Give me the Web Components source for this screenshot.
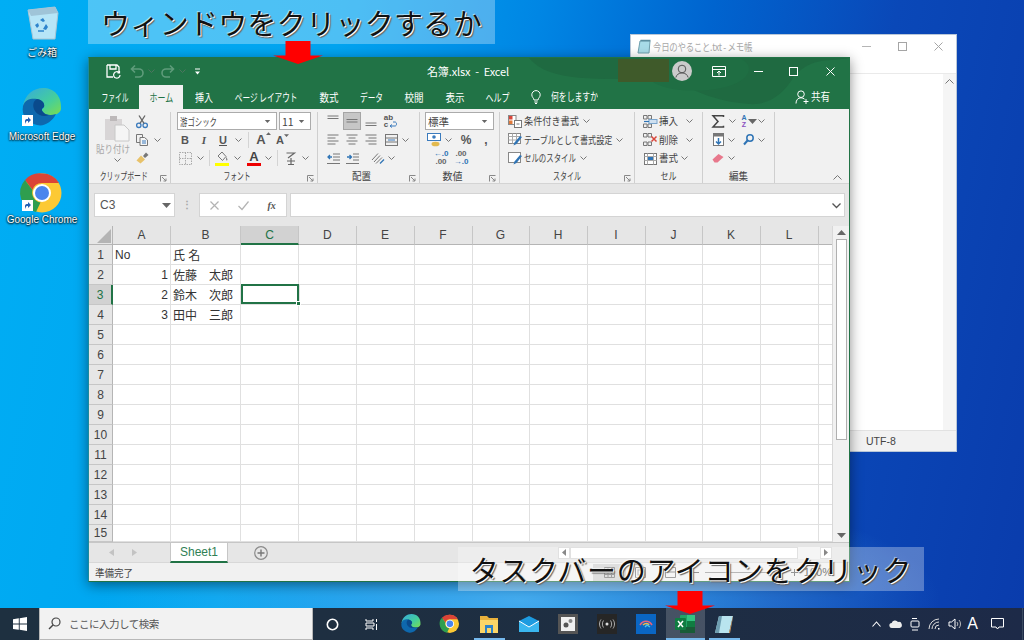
<!DOCTYPE html>
<html lang="ja"><head><meta charset="utf-8"><title>Excel</title>
<style>
html,body{margin:0;padding:0;width:1024px;height:640px;overflow:hidden;font-family:"Noto Sans CJK JP","Liberation Sans",sans-serif}
</style></head><body>
<desk-top></desk-top>
<script>
const JP='"Noto Sans CJK JP","Noto Sans",sans-serif';
const S=(c,w=1)=>`fill="none" stroke="${c}" stroke-width="${w}"`;
const ICONS={
 chev:[7,4,`<path d="M.5.5 3.5 3.5 6.5.5" ${S('#777')}/>`],
 save:[16,16,`<path d="M2 2h10l2 2v5M2 2v12h6M5 2v4h6V2" ${S('#fff',1.3)}/><path d="M15 12a3.2 3.2 0 1 1-1-2.4M14.500 8v2h-2" ${S('#fff',1.2)}/>`],
 undo:[16,16,`<path d="M3 6h7a4 4 0 0 1 0 8H6M6 2.500 2.500 6 6 9.500" ${S('#5f9c7b',1.6)}/>`],
 redo:[16,16,`<path d="M13 6H6a4 4 0 0 0 0 8h4M10 2.500 13.500 6 10 9.500" ${S('#5f9c7b',1.6)}/>`],
 qat:[7,7,`<path d="M1 1h5" ${S('#fff')}/><path d="M1 3.500h5L3.500 6.500z" fill="#fff"/>`],
 rbn:[14,11,`<path d="M.5.5h13v10H.5zM.5 3.500h13" ${S('#fff')}/><path d="M7 9.500V5M5 7l2-2 2 2" ${S('#fff')}/>`],
 min:[11,11,`<path d="M2 5.500h9" ${S('#fff')}/>`],
 max:[9,9,`<rect x=".5" y=".5" width="8" height="8" ${S('#fff')}/>`],
 close:[9,9,`<path d="M.5.5l8 8M8.500.5l-8 8" ${S('#fff')}/>`],
 nmin:[9,9,`<path d="M0 4.500h9" ${S('#b5b5b5')}/>`],
 nmax:[9,9,`<rect x=".5" y=".5" width="8" height="8" ${S('#a5a5a5')}/>`],
 nclose:[9,9,`<path d="M.5.5l8 8M8.500.5l-8 8" ${S('#a5a5a5')}/>`],
 avatar:[20,20,`<circle cx="10" cy="10" r="10" fill="#cbcbcb"/><circle cx="10" cy="8" r="3.800" ${S('#555')}/><path d="M3.800 16.500a6.500 6.500 0 0 1 12.400 0" ${S('#555')}/>`],
 bulb:[10,14,`<path d="M3 10C2.800 8 .8 7.200.8 4.800a4.200 4.200 0 0 1 8.400 0C9.200 7.200 7.200 8 7 10zM3.300 12h3.400M4 13.500h2" ${S('#fff')}/>`],
 share:[14,14,`<circle cx="6" cy="4.200" r="3.300" ${S('#fff')}/><path d="M1 13.500c0-3.500 2-5.700 5-5.700 1.500 0 2.500.5 3.500 1.300M11 9v5M8.500 11.500h5" ${S('#fff')}/>`],
 paste:[26,27,`<rect x="1" y="4" width="17" height="21" fill="#d8d5d6"/><rect x="6" y="1" width="7" height="5" fill="#bdb9ba"/><path d="M11 10h9l5 5v11H11z" fill="#f5f5f5" stroke="#c8c8c8"/>`],
 cut:[12,13,`<circle cx="2.800" cy="10.300" r="2.200" ${S('#3b7bbd',1.3)}/><circle cx="9.200" cy="10.300" r="2.200" ${S('#3b7bbd',1.3)}/><path d="M4 8.300 9 .5M8 8.300 3 .5" ${S('#666',1.300)}/>`],
 copy:[12,12,`<path d="M.5.5h6v8h-6z" ${S('#777')}/><path d="M4 3.500h4.500l3 2.500v5.500H4z" fill="#f5f5f5" stroke="#777"/><path d="M6 7h4M6 9h4" ${S('#3b7bbd')}/>`],
 painter:[13,12,`<path d="M.5 8.500l4.500-5 4 4-4.500 4z" fill="#e8c26a"/><path d="M7 4l3-3.500 2.500 2.500L9 6z" fill="#777"/>`],
 borders:[13,13,`<path d="M.5.5h12v12H.5zM6.500.5v12M.5 6.500h12" fill="none" stroke="#aaa" stroke-dasharray="1.500 1"/>`],
 fill:[14,16,`<path d="M3 6l4-4 4 4.500-3.500 4z" fill="#f3f3f3" stroke="#777"/><path d="M11 7c1 1.300 1.500 2 1.500 2.800s-1.500 1-1.500 0z" fill="#888"/><rect x="0" y="13" width="14" height="3" fill="#ffff00"/>`],
 phon:[11,15,`<path d="M1.500 2h8L3 7M2 10h8M6 7v7M3 13.500h6" ${S('#666',1.200)}/>`],
 atop:[12,12,`<path d="M.5 1h11M.5 3.500h11" ${S('#777')}/>`],
 amid:[12,12,`<path d="M.5 4.500h11M.5 7h11" ${S('#777')}/>`],
 abot:[12,12,`<path d="M.5 8h11M.5 10.500h11" ${S('#777')}/>`],
 wrap:[9,7,`<path d="M3 6.500 1 5l2-1.500M1 5h5c2 0 2-4 0-4H4" ${S('#3b7bbd')}/>`],
 al:[12,11,`<path d="M.5 1h11M.5 4h8M.5 7h11M.5 10h8" ${S('#777')}/>`],
 ac:[12,11,`<path d="M.5 1h11M2.500 4h7M.5 7h11M2.500 10h7" ${S('#777')}/>`],
 ar:[12,11,`<path d="M.5 1h11M3.500 4h8M.5 7h11M3.500 10h8" ${S('#777')}/>`],
 merge:[13,12,`<rect x=".5" y=".5" width="12" height="11" ${S('#777')}/><path d="M.5 4h12M.5 8h12" ${S('#777')}/><path d="M3 6h7" ${S('#3b7bbd')}/>`],
 indl:[13,11,`<path d="M6 1h7M6 4h7M6 7h7M0 10.500h13" ${S('#777')}/><path d="M5 4H1M3 2 1 4l2 2" ${S('#2f74b5',1.300)}/>`],
 indr:[13,11,`<path d="M7 1h6M7 4h6M7 7h6M0 10.500h13" ${S('#777')}/><path d="M1 4h4M3.500 2l2 2-2 2" ${S('#2f74b5',1.300)}/>`],
 orient:[14,12,`<path d="M1 8 7 1.500M3 10l6-6.500M5 11.500l6-6" ${S('#777')}/><path d="M9 11.500l4-4" ${S('#2f74b5',1.300)}/>`],
 acct:[14,14,`<rect x=".5" y=".5" width="13" height="7" fill="#fff" stroke="#3b7bbd"/><circle cx="7" cy="4" r="1.800" fill="#3b7bbd"/><ellipse cx="8.500" cy="11" rx="4" ry="2.300" fill="#e2b94e"/>`],
 cf:[14,13,`<rect x=".5" y=".5" width="7.500" height="9" fill="#fff" stroke="#888"/><rect x="1" y="1" width="3.500" height="3.500" fill="#d9473b"/><rect x="1" y="5.500" width="3.500" height="3.500" fill="#e0793a"/><rect x="6.500" y="5.500" width="7" height="7" fill="#fff" stroke="#777"/><path d="M8.500 9h3" ${S('#777')}/>`],
 tf:[14,13,`<rect x=".5" y=".5" width="12" height="10" fill="#fff" stroke="#888"/><path d="M.5 3.500h12M.5 7h12M4.500.5v10M8.500.5v10" ${S('#aaa')}/><path d="M14 4 8.500 11l-3 1.500 1-3L12 3z" fill="#2f74b5"/>`],
 cs:[14,13,`<rect x=".5" y=".5" width="12" height="10" fill="#fff" stroke="#888"/><path d="M14 4 8.500 11l-3 1.500 1-3L12 3z" fill="#2f74b5"/>`],
 ins:[14,13,`<path d="M.5.5h3.500v3.500H.5zM5 .5h3.500v3.500H5zM.5 9h3.500v3.500H.5zM5 9h3.500v3.500H5z" ${S('#777')}/><rect x="6" y="4.500" width="8" height="4" fill="#cfe0f0" stroke="#7aa5cc"/><path d="M1 6.500h5" ${S('#2f74b5',1.200)}/>`],
 del:[14,13,`<path d="M.5.5h3.500v3.500H.5zM5 .5h3.500v3.500H5zM.5 9h3.500v3.500H.5zM5 9h3.500v3.500H5z" ${S('#777')}/><path d="M8.500 3.500l5 5M13.500 3.500l-5 5" ${S('#d9473b',1.500)}/>`],
 fmt:[13,13,`<rect x=".5" y="1.500" width="12" height="11" fill="#fff" stroke="#777"/><rect x="3.500" y="4.500" width="6" height="4" fill="#2f74b5"/><path d="M.5 4.500h12M.5 8.500h12M3.500 1.500v11M9.500 1.500v11" ${S('#aaa')}/>`],
 sigma:[12,13,`<path d="M11.500 2V.8H1L6 6.500 1 12h10.500v-1.200" ${S('#444',1.500)}/>`],
 filld:[11,13,`<rect x=".5" y=".5" width="10" height="12" fill="#fff" stroke="#777"/><rect x="1" y="1" width="9" height="2.500" fill="#777"/><path d="M5.500 5v6M3 8.500l2.500 2.500L8 8.500" ${S('#2f74b5',1.500)}/>`],
 find:[11,11,`<circle cx="7" cy="4" r="3.200" ${S('#2f74b5',1.500)}/><path d="M4.500 6.500 1 10.500" ${S('#2f74b5',2)}/>`],
 eraser:[12,10,`<path d="M.5 6.500 6.500 1l5 3-6 5.500h-3z" fill="#e8788c"/>`],
 launch:[7,7,`<path d="M.5 6.500v-6h6" ${S('#888')}/><path d="M2 2l4 4M6 3.500V6H3.500" ${S('#888')}/>`],
 up:[9,5,`<path d="M.5 4.500 4.500.5l4 4" ${S('#777')}/>`],
 xb:[9,9,`<path d="M.5.5l8 8M8.500.5l-8 8" ${S('#b3b3b3',1.200)}/>`],
 ck:[11,9,`<path d="M.5 5 4 8.500 10.500.5" ${S('#b3b3b3',1.200)}/>`],
 fbchev:[9,5,`<path d="M.5.5l4 4 4-4" ${S('#555',1.300)}/>`],
 corner:[14,14,`<path d="M14 0v14H0z" fill="#b4b4b4"/>`],
 tl:[5,7,`<path d="M5 0v7L0 3.500z" fill="#c3c3c3"/>`],
 tr:[5,7,`<path d="M0 0v7l5-3.500z" fill="#c3c3c3"/>`],
 plus:[14,14,`<circle cx="7" cy="7" r="6.300" ${S('#8a8a8a',1.200)}/><path d="M3.500 7h7M7 3.500v7" ${S('#777',1.400)}/>`],
 sup:[9,5,`<path d="M0 5 4.500 0 9 5z" fill="#666"/>`],
 sdn:[9,5,`<path d="M0 0 4.500 5 9 0z" fill="#666"/>`],
 sl:[4,7,`<path d="M4 0v7L0 3.500z" fill="#555"/>`],
 sr:[4,7,`<path d="M0 0v7l4-3.500z" fill="#555"/>`],
 vgrid:[11,11,`<path d="M.5.5h10v10H.5zM.5 4h10M.5 7.500h10M4 .5v10M7.500 .5v10" ${S('#777')}/>`],
 vpage:[11,11,`<path d="M.5.5h10v10H.5z" ${S('#777')}/><rect x="3" y="3" width="5" height="5" ${S('#999')}/>`],
 vbrk:[11,11,`<path d="M.5.5h10v10H.5zM.5 5h10" ${S('#777')}/>`],
 zm:[7,7,`<path d="M0 3.500h7" ${S('#666')}/>`],
 zp:[7,7,`<path d="M0 3.500h7M3.500 0v7" ${S('#666')}/>`],
 notepad:[15,15,`<path d="M3 2h10l-1 12H1z" fill="#a8dbe8" stroke="#6f9fae"/><path d="M3.500 1.500h10" ${S('#5d8fa0',1.500)}/>`],
 bin:[34,36,`<path d="M3 6 30 3l3 6-3 26H8z" fill="#dff1f8" fill-opacity=".82" stroke="#a9c6d4"/><path d="M3 6 30 3l3 6-27 3z" fill="#9fc4d8"/><path d="M15 16l3-2 2 3-2 1zM12 24l-2-3 3-2 1 3zM21 20l2 3-2 3-3-1z" fill="#2d83cc"/><path d="M13 27h6" ${S('#2d83cc',1.500)}/>`],
 edge:[40,40,`<defs><linearGradient id="eg" x1="0" y1="0" x2="1" y2="1"><stop offset="0" stop-color="#36a9df"/><stop offset=".6" stop-color="#45cf9a"/><stop offset="1" stop-color="#7ddc4e"/></linearGradient></defs><path d="M1 18C3 6 12 0 21 0c11 0 19 8 18 21-1 5-6 6-11 6-5 0-8-2-8-5 0-1 1-2 2-3-2-4-7-7-12-5-5 1-8 4-9 4z" fill="url(#eg)"/><path d="M1 18C3 11 10 10 15 11c6 1 8 5 7 8-2 1-3 3-1 5 2 3 8 4 13 2-4 8-12 13-19 11C6 35-1 28 1 18z" fill="#0e68ad"/><path d="M15 11c6 1 8 5 7 8-2 1-3 3-1 5 1 2 4 3 6 3-4 2-11 1-14-4-3-5-2-10 2-12z" fill="#0a4a8c"/>`],
 chrome:[40,40,`<circle cx="20" cy="20" r="19.500" fill="#fcc934"/><path d="M20 .5A19.500 19.500 0 0 1 37 10H20a10 10 0 0 0-9.500 7L3 7A19.500 19.500 0 0 1 20 .5z" fill="#db4437"/><path d="M3 7l7.500 10a10 10 0 0 0 8 12.500L14 39A19.500 19.500 0 0 1 3 7z" fill="#2f9e4f"/><circle cx="20" cy="20" r="9" fill="#fff"/><circle cx="20" cy="20" r="7" fill="#4a85ed"/>`],
 shortcut:[11,11,`<rect width="11" height="11" fill="#fff"/><path d="M3 9V6c0-1.500 1-2 2.500-2H6V2l3 3-3 3V6h-.5C4.500 6 4 6.500 3 9z" fill="#2461b5"/>`],
 win:[14,14,`<path d="M0 2.200 5.800 1.300v5.300H0zM6.700 1.200 14 0v6.600H6.700zM0 7.500h5.800v5.300L0 12zM6.700 7.500H14V14l-7.300-1.200z" fill="#fff"/>`],
 search:[13,13,`<circle cx="8" cy="5" r="4" ${S('#444',1.200)}/><path d="M5 8 1 12" ${S('#444',1.400)}/>`],
 cortana:[13,13,`<circle cx="6.500" cy="6.500" r="5.200" ${S('#fff',1.600)}/>`],
 tview:[13,13,`<path d="M1 1v2h7V1M1 12v-2h7v2M1 5h8v3H1zM11.500 1v3M11.500 6v6" ${S('#fff')}/>`],
 folder:[18,18,`<path d="M0 1h7l2 2h9v15H0z" fill="#e8b13c"/><rect y="5" width="18" height="13" fill="#fbd667"/><rect x="5" y="10" width="8" height="8" fill="#2c83c9"/><rect x="7" y="13" width="4" height="5" fill="#fbd667"/>`],
 mail:[20,16,`<path d="M0 5 10 0l10 5v11H0z" fill="#1d9be0"/><path d="M0 5l10 6 10-6v11H0z" fill="#3ab7f0"/><path d="M0 5l10 6 10-6" ${S('#fff',1)}/>`],
 app1:[20,20,`<rect width="20" height="20" fill="#555"/><rect x="3" y="3" width="14" height="14" fill="#f0f0f0"/><circle cx="8" cy="11" r="2.500" fill="#555"/><circle cx="12.500" cy="7" r="2" fill="#888"/>`],
 app2:[20,20,`<rect width="20" height="20" fill="#262626"/><circle cx="10" cy="10" r="1.500" fill="#ddd"/><path d="M6.500 6.500c-1.500 2-1.500 5 0 7M13.500 6.500c1.500 2 1.500 5 0 7M4 5.500c-2 3-2 6 0 9M16 5.500c2 3 2 6 0 9" ${S('#ccc',.8)}/>`],
 app3:[20,20,`<rect width="20" height="20" fill="#0a66c4"/><path d="M4 11c3-5 9-5 12 0" ${S('#e8637a',1.600)}/><path d="M7 11c2-2 5-2 6 0" ${S('#f1b94a',1.600)}/><path d="M9 13l2-2 3 2" ${S('#4ec2e8',1.400)}/>`],
 excel:[20,18,`<rect x="5" y="0" width="15" height="18" rx="1" fill="#21a366"/><rect x="12" y="0" width="8" height="6" fill="#33c481"/><rect x="5" y="12" width="15" height="6" fill="#185c37"/><rect x="12" y="6" width="8" height="6" fill="#107c41"/><rect x="0" y="3" width="11" height="12" rx="1" fill="#107c41"/><path d="M3 6l5 6M8 6l-5 6" ${S('#fff',1.500)}/>`],
 npad:[20,19,`<path d="M5 1h14l-4 17H1z" fill="#b9e4ef"/><path d="M1 18 5 1h3L5 18z" fill="#6d9db0"/><path d="M15 18l4-17v1l-3 16z" fill="#e2a058"/>`],
 tup:[9,6,`<path d="M.5 5.500 4.500 1l4 4.500" ${S('#fff',1.100)}/>`],
 cloud:[13,8,`<path d="M3 8a2.500 2.500 0 0 1-.3-5A3.500 3.500 0 0 1 9 2a3 3 0 0 1 1.500 6z" fill="#ededed"/>`],
 meet:[10,15,`<rect x="1" y="4" width="8" height="6" rx="1" ${S('#fff')}/><path d="M2 1.500h5M2 13h6" ${S('#fff')}/>`],
 wifi:[13,12,`<path d="M1 11a10 10 0 0 1 10-10M4 11a7 7 0 0 1 7-7M7 11a4 4 0 0 1 4-4" ${S('#ddd')}/><path d="M10 10h1.500v1.500H10z" fill="#fff"/>`],
 vol:[13,12,`<path d="M1 4h2.500L7 1v10L3.500 8H1z" ${S('#fff')}/><path d="M9 4a3 3 0 0 1 0 4M11 2a6 6 0 0 1 0 8" ${S('#bbb')}/>`],
 note:[13,12,`<path d="M.5.5h12v8.500H8L6.500 11 5 9H.5z" ${S('#fff')}/>`],
 blob:[760,51,`<path d="M440 0c20 25 70 20 130 22 30 2 40 20 90 24 25 2 40-18 45-28 20-20 35-14 55-18z" fill="#1f6a41"/><path d="M560 0c-15 20 10 36 60 32 40-4 50-24 30-32z" fill="#1f6e43"/>`]
};
ICONS['edge-s']=[20,20,'<g transform="scale(.5)">'+ICONS.edge[2].replace('id="eg"','id="eg2"').replace('url(#eg)','url(#eg2)')+'</g>'];
ICONS['chrome-s']=[20,20,'<g transform="scale(.47) translate(1,1)">'+ICONS.chrome[2]+'</g>'];
class XIcon extends HTMLElement{
 connectedCallback(){
  if(this.shadowRoot)return;
  const d=ICONS[this.getAttribute('n')];
  const r=this.attachShadow({mode:'open'});
  r.innerHTML=`<style>:host{display:inline-flex;flex:none;line-height:0}svg{display:block;overflow:visible}</style><svg xmlns="http://www.w3.org/2000/svg" width="${d[0]}" height="${d[1]}" viewBox="0 0 ${d[0]} ${d[1]}">${d[2]}</svg>`;
 }
}
customElements.define('x-icon',XIcon);
const I=n=>`<x-icon n="${n}"></x-icon>`;
/* narrow UI text: the reference's UI face has much narrower kana than any installed CJK family */
const FT=(t,w,size=10.5,origin='left',n=null)=>{
 const len=n||[...t].reduce((a,c)=>a+(c===' '?.25:1),0);
 return `<span style="display:inline-block;white-space:nowrap;font-size:${size}px;transform:scaleX(${(w/(len*size)).toFixed(3)});transform-origin:${origin} center">${t}</span>`;
};
const FB=(t,w,size=10.5,n=null)=>`<span style="display:block;width:${w}px;white-space:nowrap;line-height:1.3">${FT(t,w,size,'left',n)}</span>`;

class DeskShortcut extends HTMLElement{
 connectedCallback(){
  if(this.shadowRoot)return;
  const sc=this.hasAttribute('link');
  const r=this.attachShadow({mode:'open'});
  r.innerHTML=`<style>:host{display:flex;flex-direction:column;align-items:center;width:84px;height:var(--h,84px);color:#fff;font:10px "Liberation Sans",${JP};text-shadow:0 1px 2px #000,0 0 2px #000}
  .pic{position:relative;display:flex;height:var(--ph,40px);align-items:center}
  .sc{position:absolute;left:0;bottom:2px;line-height:0}
  .t{margin-top:var(--mt,3px);white-space:nowrap}</style>
  <div class="pic"><slot></slot>${sc?`<span class="sc">${I('shortcut')}</span>`:''}</div><div class="t">${this.getAttribute('label')}</div>`;
 }
}
customElements.define('desk-shortcut',DeskShortcut);

class NoteBanner extends HTMLElement{
 constructor(){super();this.attachShadow({mode:'open'}).innerHTML=`<style>:host{display:flex;align-items:center;justify-content:center;background:rgba(255,255,255,.3);height:44px;box-sizing:border-box;color:#111;font:400 29px/44px "Noto Sans CJK JP",sans-serif;white-space:nowrap;text-shadow:1px 1px 0 #fff,-1px -1px 0 rgba(255,255,255,.5),2px 2px 1px #666}</style><slot></slot>`}
}
customElements.define('note-banner',NoteBanner);

class RedArrow extends HTMLElement{
 constructor(){super();this.attachShadow({mode:'open'}).innerHTML=`<style>:host{display:block;width:50px;height:23px;line-height:0}</style><svg xmlns="http://www.w3.org/2000/svg" width="50" height="23" viewBox="0 0 50 23"><path d="M12.500 0h25v14.500H50L25 23 0 14.500h12.500z" fill="#ff0000"/></svg>`}
}
customElements.define('red-arrow',RedArrow);

class NotepadWindow extends HTMLElement{
 constructor(){super();this.attachShadow({mode:'open'}).innerHTML=`<style>
 :host{display:flex;flex-direction:column;box-sizing:border-box;background:#fff;border:1px solid #b9c7d8;font:11px ${JP};color:#aaa}
 .tb{display:flex;align-items:center;height:23px;padding:0 0 0 6px;flex:none}
 .tt{margin-left:1px;flex:1;font-size:10.500px;color:#a8a8a8;white-space:nowrap;letter-spacing:-.3px}
 .tt span{display:inline-block;transform:scaleX(.8);transform-origin:left center}
 .c{width:36px;display:flex;justify-content:center}
 .menu{height:15px;flex:none;border-bottom:1px solid #eaeaea}
 .body{flex:1;display:flex;justify-content:flex-end}
 .sb{width:13px;background:#f5f5f5;display:flex;justify-content:center;padding-top:5px;box-sizing:border-box}
 .st{height:20px;flex:none;background:#f2f2f2;border-top:1px solid #e2e2e2;color:#444;display:flex;align-items:center;padding-left:235px;font:10.500px "Liberation Sans",sans-serif}
 </style><div class="tb">${I('notepad')}<div class="tt"><span>今日のやること.txt - メモ帳</span></div><span class="c">${I('nmin')}</span><span class="c">${I('nmax')}</span><span class="c">${I('nclose')}</span></div><div class="menu"></div><div class="body"><div class="sb">${I('up')}</div></div><div class="st">UTF-8</div>`}
}
customElements.define('notepad-window',NotepadWindow);

class RbGroup extends HTMLElement{
 constructor(){super();
  this.attachShadow({mode:'open'}).innerHTML=`<style>
  :host{display:flex;flex-direction:column;box-sizing:border-box;width:var(--w);height:71px;border-right:1px solid #cfcfcf;position:relative;flex:none}
  .b{height:56px;flex:none}
  .lb{height:14px;margin-top:1px;display:flex;justify-content:center;align-items:center;font:10.500px/14px ${JP};color:#444;white-space:nowrap;padding-right:var(--lo,0);box-sizing:border-box}
  .l{position:absolute;right:3px;bottom:1px;line-height:0}
  </style><div class="b"><slot></slot></div><div class="lb"></div><span id="ll"></span>`;
 }
 connectedCallback(){
  this.shadowRoot.querySelector('.lb').innerHTML=FT(this.getAttribute('label')||'',+this.getAttribute('lw'),10.5,'center');
  if(this.hasAttribute('launch'))this.shadowRoot.getElementById('ll').innerHTML=`<span class="l">${I('launch')}</span>`;
 }
}
customElements.define('rb-group',RbGroup);

/* a flow row: each item is placed by its centre through margins */
function row(base,items){
 let cur=base,out='';
 for(const [c,cx,w=16] of items){
  const left=cx-w/2,m=left-cur;
  out+=`<span class="it" style="margin-left:${m}px;width:${w}px">${c}</span>`;cur=left+w;
 }
 return `<div class="row">${out}</div>`;
}
const CH=I('chev');
const B=(t,x='')=>`<b style="font:700 11px 'Liberation Sans',sans-serif;color:#555;${x}">${t}</b>`;
const cmb=(t,w)=>`<span class="cmb" style="width:${w}px"><span>${t}</span>${I('sdn')}</span>`;

class RibbonBar extends HTMLElement{
 constructor(){super();
 const sep='<i class="vs"></i>';
 this.attachShadow({mode:'open'}).innerHTML=`<style>
 :host{display:flex;height:75px;background:#f1f1f1;padding:3px 0 0 2px;box-sizing:border-box;position:relative;border-bottom:1px solid #d4d4d4}
 .row{display:flex;align-items:center;height:18.500px;white-space:nowrap}
 .it{display:flex;align-items:center;justify-content:center;flex:none;height:18px;font:10.500px ${JP};color:#444}
 .cmb{display:flex;align-items:center;justify-content:space-between;box-sizing:border-box;height:18px;flex:none;background:#fff;border:1px solid #ababab;padding:0 4px 0 2px;font:10.500px ${JP};color:#444;overflow:hidden}
 .cmb x-icon{transform:scale(.6)}
 .vs{display:block;width:1px;height:16px;background:#d4d4d4}
 .hl{display:flex;align-items:center;justify-content:center;width:18px;height:18px;background:#c6c6c6;border:1px solid #a5a5a5;box-sizing:border-box}
 .clip{display:flex;height:56px}
 .pst{width:52px;display:flex;flex-direction:column;align-items:center;padding-top:3px;font:10.500px ${JP};color:#a8a8a8;line-height:13px;box-sizing:border-box;overflow:hidden;flex:none}
 .pst .c{margin-top:3px;line-height:0}
 .top{position:absolute;right:7px;bottom:3px;line-height:0}
 .pct{font:700 12px "Liberation Sans",sans-serif;color:#555}
 .dec{font:700 8px/8px "Liberation Sans",sans-serif;color:#666;display:flex;flex-direction:column;align-items:center}
 .dec u{text-decoration:none;color:#2f74b5}
 .sa{font:700 7px/7px "Liberation Sans";color:#8a4fc0;display:flex;flex-direction:column;align-items:center}
 .sa em{font-style:normal;color:#2f74b5}
 .ac{font:700 13px "Liberation Sans";color:#555;position:relative}
 .tA{font:700 13px/13px "Liberation Sans";color:#444;display:flex;flex-direction:column;align-items:center}
 .tA i{display:block;width:14px;height:3px;background:#e00}
 .abc{font:700 8px/7px "Liberation Sans";color:#555;display:flex;flex-direction:column;align-items:flex-start}
 .abc span{display:flex;align-items:center;gap:1px}
 </style>
 <rb-group style="--w:80px;--lo:14px" label="クリップボード" lw="48" launch>
  <div class="clip"><div class="pst">${I('paste')}${FT('貼り付け',34)}<span class="c">${I('chev')}</span></div>
  <div>${row(143,[[I('cut'),142]])}${row(143,[[I('copy'),142],[CH,157,10]])}${row(143,[[I('painter'),142]])}</div></div>
 </rb-group>
 <rb-group style="--w:147px;--lo:14px" label="フォント" lw="27" launch>
  ${row(171,[[cmb(FT('游ゴシック',37),100),227,100],[cmb('11',32),295,32]])}
  ${row(171,[[B('B'),185],[B('I',"font-style:italic;font-family:'Liberation Serif'"),204],[B('U','text-decoration:underline'),223],[CH,238,10],[sep,248,4],[`<span class="ac">A<x-icon n="sup" style="position:absolute;transform:scale(.55);left:8px;top:-1px"></x-icon></span>`,261,16],[`<span class="ac" style="font-size:11px">A<x-icon n="sdn" style="position:absolute;transform:scale(.55);left:6px;top:-1px"></x-icon></span>`,280,16]])}
  ${row(171,[[I('borders'),185],[CH,200,10],[sep,209,1],[I('fill'),222],[CH,237,10],[`<span class="tA">A<i></i></span>`,254,16],[CH,268,10],[sep,277,2],[I('phon'),290],[CH,305,10]])}
 </rb-group>
 <rb-group style="--w:102px;--lo:14px" label="配置" lw="19" launch>
  ${row(318,[[I('atop'),333],[`<span class="hl">${I('amid')}</span>`,352,18],[I('abot'),371],[`<span class="abc"><span>ab</span><span>c${I('wrap')}</span></span>`,391]])}
  ${row(318,[[I('al'),333],[I('ac'),352],[I('ar'),371],[I('merge'),391],[CH,405,10]])}
  ${row(318,[[I('indl'),333],[I('indr'),352],[I('orient'),378],[CH,391,10]])}
 </rb-group>
 <rb-group style="--w:80px;--lo:14px" label="数値" lw="20" launch>
  ${row(420,[[cmb('標準',69),459.500,69]])}
  ${row(420,[[I('acct'),434],[CH,448,10],[`<span class="pct">%</span>`,466],[`<b style="color:#555;font:700 12px 'Liberation Sans'">,</b>`,486]])}
  ${row(420,[[`<span class="dec"><u>←.0</u>.00</span>`,441,18],[`<span class="dec">.00<u>→.0</u></span>`,461,18]])}
 </rb-group>
 <rb-group style="--w:135px" label="スタイル" lw="28" launch>
  ${row(500,[[I('cf'),515],[FB('条件付き書式',55),551.500,55],[CH,586,10]])}
  ${row(500,[[I('tf'),515],[FB('テーブルとして書式設定',89),568.500,89],[CH,619,10]])}
  ${row(500,[[I('cs'),515],[FB('セルのスタイル',52),550,52],[CH,583,10]])}
 </rb-group>
 <rb-group style="--w:68px" label="セル" lw="16">
  ${row(635,[[I('ins'),650,16],[FB('挿入',19),668.500,19],[CH,689,10]])}
  ${row(635,[[I('del'),650,16],[FB('削除',19),668.500,19],[CH,689,10]])}
  ${row(635,[[I('fmt'),650,16],[FB('書式',19),668.500,19],[CH,684,10]])}
 </rb-group>
 <rb-group style="--w:72px" label="編集" lw="19">
  ${row(703,[[I('sigma'),718],[CH,732,10],[`<span class="sa"><em>A</em>Z</span>`,744,8],[I('sdn'),752,9],[CH,761,10]])}
  ${row(703,[[I('filld'),718],[CH,731,10],[I('find'),748,14],[CH,761,10]])}
  ${row(703,[[I('eraser'),718],[CH,731,10]])}
 </rb-group>
 <span class="top">${I('up')}</span>`;
 }
}
customElements.define('ribbon-bar',RibbonBar);

const COLS=[['A',58],['B',70],['C',58],['D',57.500],['E',58],['F',58],['G',57],['H',58],['I',58],['J',57],['K',58],['L',58],['',15]];
const DATA={1:{A:['No','l'],B:['氏 名','l']},2:{A:['1','r'],B:['佐藤　太郎','l']},3:{A:['2','r'],B:['鈴木　次郎','l']},4:{A:['3','r'],B:['田中　三郎','l']}};
class SheetGrid extends HTMLElement{
 constructor(){super();
 let h=`<div class="cn h">${I('corner')}</div>`;
 COLS.forEach(([c])=>h+=`<div class="h ch ${c==='C'?'sel':''}">${c}</div>`);
 for(let r=1;r<=15;r++){
  h+=`<div class="h rh ${r===3?'sel':''}">${r}</div>`;
  COLS.forEach(([c])=>{const d=(DATA[r]||{})[c];const ac=r===3&&c==='C';
   h+=`<div class="c ${d?d[1]:''} ${ac?'act':''}">${d?`<span>${d[0]}</span>`:''}</div>`});
 }
 this.attachShadow({mode:'open'}).innerHTML=`<style>
 :host{display:grid;grid-template-columns:24px ${COLS.map(c=>c[1]+'px').join(' ')};grid-template-rows:19px repeat(14,20px) 17px;overflow:hidden;background:#fff;font:12px "Liberation Sans",${JP};color:#333;min-width:0}
 .h{background:#e6e6e6;display:flex;align-items:center;justify-content:center;color:#444;box-sizing:border-box;font:12px "Liberation Sans",sans-serif}
 .ch{border-right:1px solid #c6c6c6;border-bottom:1px solid #b5b5b5}
 .rh{border-right:1px solid #b5b5b5;border-bottom:1px solid #c6c6c6}
 .ch.sel{background:#d2d2d2;color:#217346;border-bottom:2px solid #217346}
 .rh.sel{background:#d2d2d2;color:#217346;border-right:2px solid #217346}
 .cn{justify-content:flex-end;align-items:flex-end;padding:0 1px 1px 0;border-right:1px solid #b5b5b5;border-bottom:1px solid #b5b5b5}
 .c{border-right:1px solid #e0e0e0;border-bottom:1px solid #e0e0e0;box-sizing:border-box;display:flex;align-items:center;padding:0 2px;white-space:nowrap;position:relative}
 .c.r{justify-content:flex-end}
 .act{box-shadow:inset 0 0 0 2px #217346;overflow:visible;z-index:1;margin:-1px -1px 0 0}
 .act::after{content:"";position:absolute;right:-2px;bottom:-2px;width:5px;height:5px;background:#217346;border:1px solid #fff;box-sizing:border-box}
 </style>${h}`;
 }
}
customElements.define('sheet-grid',SheetGrid);

class ExcelWindow extends HTMLElement{
 constructor(){super();
 const tabs=[['ファイル',49,27],['ホーム',44,24],['挿入',42,18],['ページ レイアウト',83,63],['数式',41,19],['データ',45,23],['校閲',39,19],['表示',43,19],['ヘルプ',42,24]];
 this.attachShadow({mode:'open'}).innerHTML=`<style>
 :host{display:flex;flex-direction:column;box-sizing:border-box;border:1px solid #217346;border-left-color:#1b8b9c;background:#e6e6e6;box-shadow:0 3px 12px rgba(0,0,0,.45);font:11px ${JP};color:#444;overflow:hidden}
 .head{background:#217346;color:#fff;height:51px;flex:none;display:flex;flex-direction:column;position:relative}
 .blob{position:absolute;left:0;top:0;line-height:0}
 .tt{display:flex;align-items:center;height:26px;position:relative;flex:none}
 .q{display:flex;justify-content:center;align-items:center;flex:none}
 .name{width:300px;margin-left:115px;text-align:center;font:11px ${JP};letter-spacing:-.1px;white-space:pre;flex:none}
 .red{width:51px;height:23px;background:#3f5a2a;flex:none;align-self:flex-start;margin-top:1px}
 .tabs{display:flex;height:25px;padding-left:1px;align-items:stretch;position:relative;flex:none}
 .tab{display:flex;align-items:center;justify-content:center;flex:none;font:11px ${JP};white-space:nowrap}
 .tab.on{background:#f1f1f1;color:#217346;margin-top:1px}
 .ask{display:flex;align-items:center;margin-left:13px;gap:10px;flex:none;width:264px;box-sizing:border-box}
 .shr{display:flex;align-items:center;gap:2px}
 .fb{height:42px;flex:none;display:flex;align-items:center;padding:0 4px 0 5px;box-sizing:border-box;background:#e6e6e6}
 .nb{display:flex;align-items:center;justify-content:space-between;width:81px;height:24px;background:#fff;border:1px solid #d4d4d4;box-sizing:border-box;padding:0 3px 0 5px;font:12px "Liberation Sans",sans-serif;color:#555;flex:none}
 .dots{width:24px;display:flex;justify-content:center;color:#a5a5a5;font:700 10px/4px "Liberation Sans";flex:none}
 .fx{display:flex;align-items:center;width:88px;height:24px;background:#fff;border:1px solid #d4d4d4;box-sizing:border-box;flex:none;margin-right:3px}
 .fx span{width:29px;display:flex;justify-content:center;font:italic 700 10px "Liberation Serif",serif;color:#555}
 .inp{flex:1;height:24px;background:#fff;border:1px solid #d4d4d4;box-sizing:border-box;display:flex;align-items:center;justify-content:flex-end;padding-right:3px}
 .gridrow{display:flex;flex:none;height:316px;background:#fff}
 sheet-grid{flex:1}
 .vsb{width:17px;flex:none;background:#f1f1f1;border-left:1px solid #d8d8d8;display:flex;flex-direction:column;align-items:center;box-sizing:border-box}
 .vsb .a{height:13px;display:flex;align-items:center;flex:none}
 .vsb .th{width:11px;height:201px;background:#fff;border:1px solid #b0b0b0;box-sizing:border-box;flex:none}
 .vsb .sp{flex:1}
 .tabsrow{height:20px;flex:none;display:flex;align-items:center;background:#e6e6e6;border-top:1px solid #c6c6c6;box-sizing:border-box;position:relative}
 .nav{width:23px;display:flex;justify-content:center;flex:none}
 .sheet{width:58px;height:20px;margin-left:24px;background:#fff;border-bottom:2px solid #217346;box-sizing:border-box;color:#2f8055;text-align:center;font:12px/18px "Liberation Sans",sans-serif;border-left:1px solid #c6c6c6;border-right:1px solid #c6c6c6;flex:none}
 .add{margin-left:26px;line-height:0;flex:none}
 .hs{margin-left:auto;display:flex;align-items:center;height:12px;width:274px;margin-right:17px;background:#f1f1f1;flex:none}
 .hs b{width:12px;height:12px;background:#fff;border:1px solid #d4d4d4;box-sizing:border-box;display:flex;align-items:center;justify-content:center;flex:none}
 .hs i{display:block;width:228px;height:12px;background:#fff;border:1px solid #d4d4d4;box-sizing:border-box;flex:none}
 .stb{flex:1;background:#f1f1f1;border-top:1px solid #d8d8d8;box-sizing:border-box;display:flex;align-items:center;padding-left:6px;font:10.500px ${JP};color:#444;min-height:0}
 .stb .v{display:flex;align-items:center;margin-left:auto}
 .stb .vi{width:30px;height:17px;display:flex;align-items:center;justify-content:center}
 .stb .vi.on{background:#d2d2d2;width:33px}
 .zl{width:80px;height:1px;background:#999;margin:0 6px}
 </style>
 <div class="head"><span class="blob">${I('blob')}</span>
  <div class="tt">
   <span class="q" style="width:24px;margin-left:12px">${I('save')}</span>
   <span class="q" style="width:18px;margin-left:3px">${I('undo')}</span><span class="q" style="width:10px;opacity:.5">${CH}</span>
   <span class="q" style="width:18px;margin-left:3px">${I('redo')}</span><span class="q" style="width:10px;opacity:.5">${CH}</span>
   <span class="q" style="width:12px;margin-left:4px">${I('qat')}</span>
   <span class="name">名簿.xlsx  -  Excel</span>
   <span class="red"></span>
   <span class="q" style="width:20px;margin-left:3px">${I('avatar')}</span>
   <span class="q" style="width:36px;margin-left:9px">${I('rbn')}</span>
   <span class="q" style="width:36px;margin-left:2px">${I('min')}</span>
   <span class="q" style="width:36px">${I('max')}</span>
   <span class="q" style="width:38px">${I('close')}</span>
  </div>
  <div class="tabs">
   ${tabs.map(([t,w,tw],i)=>`<span class="tab ${i===1?'on':''}" style="width:${w}px">${FT(t,tw,11,'center')}</span>`).join('')}
   <span class="ask">${I('bulb')}${FB('何をしますか',47,11)}</span>
   <span class="shr">${I('share')}${FB('共有',19,11)}</span>
  </div>
 </div>
 <ribbon-bar></ribbon-bar>
 <div class="fb"><div class="nb"><span>C3</span>${I('sdn')}</div><div class="dots">⋮</div><div class="fx"><span>${I('xb')}</span><span>${I('ck')}</span><span>fx</span></div><div class="inp">${I('fbchev')}</div></div>
 <div class="gridrow"><sheet-grid></sheet-grid><div class="vsb"><span class="a">${I('sup')}</span><span class="th"></span><span class="sp"></span><span class="a">${I('sdn')}</span></div></div>
 <div class="tabsrow"><span class="nav" style="margin-left:11px">${I('tl')}</span><span class="nav">${I('tr')}</span><span class="sheet">Sheet1</span><span class="add">${I('plus')}</span>
  <span class="hs"><b>${I('sl')}</b><i></i><span style="flex:1"></span><b>${I('sr')}</b></span></div>
 <div class="stb">${FT('準備完了',38)}<span class="v"><span class="vi on">${I('vgrid')}</span><span class="vi">${I('vpage')}</span><span class="vi">${I('vbrk')}</span><span style="width:6px"></span>${I('zm')}<span class="zl"></span>${I('zp')}<span style="margin:0 17px 0 6px;font:11px 'Liberation Sans'">100%</span></span></div>`;
 }
}
customElements.define('excel-window',ExcelWindow);

class TaskBar extends HTMLElement{
 constructor(){super();
 const btn=(n,cls='')=>`<span class="tbn ${cls}">${I(n)}</span>`;
 this.attachShadow({mode:'open'}).innerHTML=`<style>
 :host{display:flex;height:32px;flex:none;align-items:stretch;background:linear-gradient(90deg,#1e3040,#1e2e42 60%,#1d2a48);color:#fff;font:11px ${JP}}
 .st{width:39px;display:flex;align-items:center;justify-content:center;flex:none}
 .se{width:274px;background:#f2f2f2;display:flex;align-items:center;padding-left:8px;gap:8px;box-sizing:border-box;color:#555;font:10.500px ${JP};letter-spacing:-.5px;flex:none;border:1px solid #b8b8b8;border-width:0 1px 1px}
 .tbn{width:39.200px;display:flex;align-items:center;justify-content:center;flex:none;position:relative;box-sizing:border-box}
 .tbn.run::after{content:"";position:absolute;left:4px;right:4px;bottom:0;height:2px;background:#76b9ed}
 .tbn.on{background:rgba(255,255,255,.18)}
 .tbn.on::after{content:"";position:absolute;left:0;right:0;bottom:0;height:2px;background:#76b9ed}
 .tray{margin-left:auto;display:flex;align-items:center;flex:none}
 .tr{display:flex;justify-content:center;align-items:center;flex:none;width:19.500px}
 .A{font:500 16px "Liberation Sans",sans-serif;width:17px;display:flex;justify-content:center}
 .end{width:9px;height:32px;box-sizing:border-box;border-left:1px solid #3a4a60;margin-left:1px;margin-right:-1px}
 </style>
 <div class="st">${I('win')}</div><div class="se">${I('search')}<span>ここに入力して検索</span></div>
 ${btn('cortana')}${btn('tview')}${btn('edge-s')}${btn('chrome-s')}${btn('folder','run')}${btn('mail')}${btn('app1')}${btn('app2')}${btn('app3')}${btn('excel','on')}${btn('npad','run')}
 <div class="tray"><span class="tr">${I('tup')}</span><span class="tr">${I('cloud')}</span><span class="tr">${I('meet')}</span><span class="tr">${I('wifi')}</span><span class="tr">${I('vol')}</span><span class="A">A</span><span class="tr" style="width:33px">${I('note')}</span><span style="width:7px"></span><span class="end" style="width:3px"></span></div>`;
 }
}
customElements.define('task-bar',TaskBar);

class DeskTop extends HTMLElement{
 constructor(){super();
 this.attachShadow({mode:'open'}).innerHTML=`<style>
 :host{display:flex;flex-direction:column;width:1024px;height:640px;overflow:hidden}
 .area{flex:1;position:relative;background:
   radial-gradient(ellipse 420px 120px at 520px 600px,rgba(90,190,245,.75),rgba(90,190,245,0) 100%),
   linear-gradient(102deg,#00aef4 0,#00a4f0 30%,#0086e4 47%,#0064cf 62%,#0a48b8 78%,#0a3cac 100%)}
 .icons{position:absolute;left:0;top:4px;display:flex;flex-direction:column}
 notepad-window{position:absolute;left:630px;top:34px;width:327px;height:418px}
 excel-window{position:absolute;left:88px;top:57px;width:762px;height:525px}
 .b1{position:absolute;left:88px;top:0;width:407px;letter-spacing:.3px;padding-bottom:1px}
 .b2{position:absolute;left:458px;top:547px;width:466px;letter-spacing:.7px;padding-bottom:1px}
 .a1{position:absolute;left:273px;top:41px}
 .a2{position:absolute;left:665px;top:591px;z-index:2}
 </style>
 <div class="area">
  <div class="icons">
   <desk-shortcut label="ごみ箱" style="--h:84px;--ph:36px;--mt:4px">${I('bin')}</desk-shortcut>
   <desk-shortcut label="Microsoft Edge" link style="--h:85px;--ph:40px;--mt:3px">${I('edge')}</desk-shortcut>
   <desk-shortcut label="Google Chrome" link style="--h:60px;--ph:40px;--mt:1px">${I('chrome')}</desk-shortcut>
  </div>
  <notepad-window></notepad-window>
  <excel-window></excel-window>
  <note-banner class="b1">ウィンドウをクリックするか</note-banner>
  <note-banner class="b2">タスクバーのアイコンをクリック</note-banner>
  <red-arrow class="a1"></red-arrow>
  <red-arrow class="a2"></red-arrow>
 </div>
 <task-bar></task-bar>`;
 }
}
customElements.define('desk-top',DeskTop);
</script>
</body></html>
